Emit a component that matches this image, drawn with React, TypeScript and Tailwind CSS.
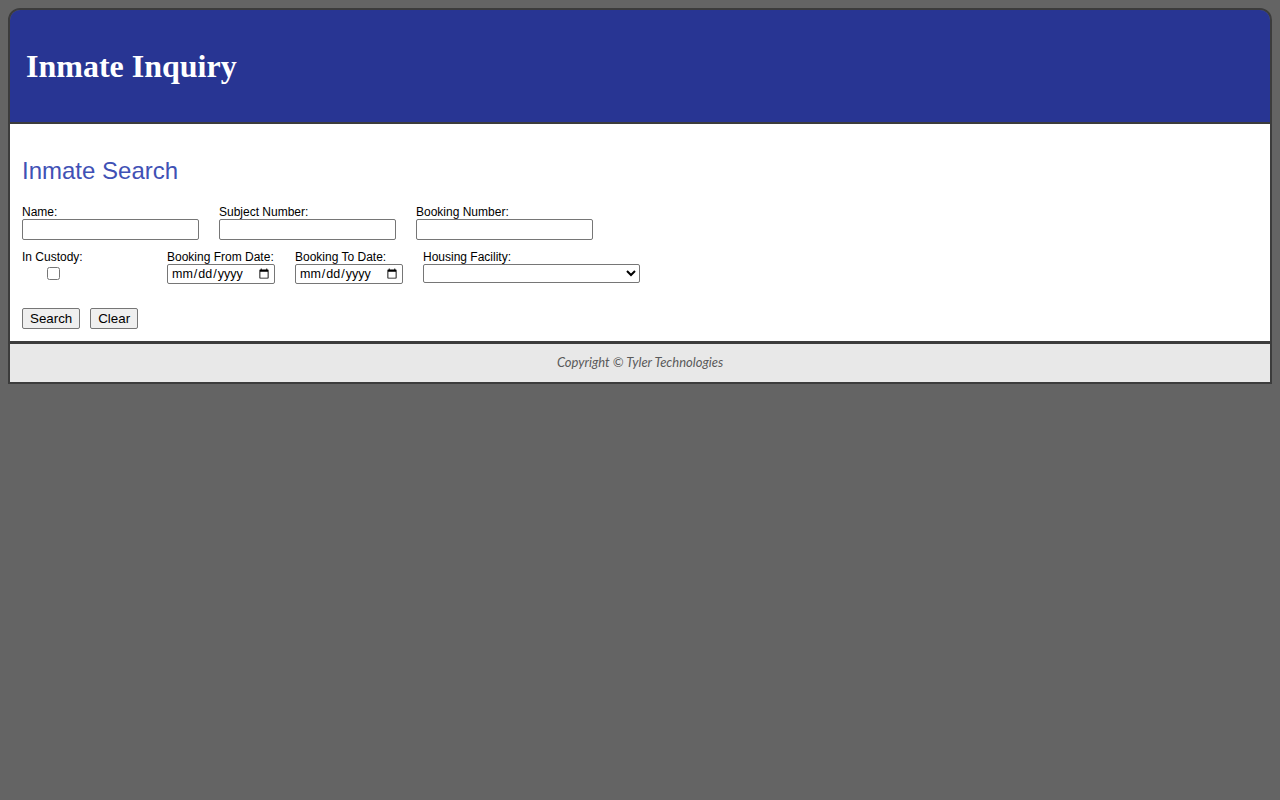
export default function App() {
  return (
    <div className="min-h-screen bg-[#646464] p-2 font-['Liberation_Sans',Arial,sans-serif]">
      <div className="overflow-hidden rounded-t-[12px] border-2 border-[#3c3c3c]">
        <header className="flex h-[114px] items-center border-b-2 border-[#3c3c3c] bg-[#283593] pl-4">
          <h1 className="font-['Liberation_Serif','Times_New_Roman',serif] text-[32px] font-bold leading-[32px] text-white">
            Inmate Inquiry
          </h1>
        </header>

        <main className="bg-white px-3 pb-3 pt-[35px]">
          <h2 className="text-[24px] leading-[24px] text-[#3f51b5]">Inmate Search</h2>

          <form className="mt-[21px]" onSubmit={(e) => e.preventDefault()}>
            <div className="flex gap-5">
              <Field label="Name:">
                <TextBox />
              </Field>
              <Field label="Subject Number:">
                <TextBox />
              </Field>
              <Field label="Booking Number:">
                <TextBox />
              </Field>
            </div>

            <div className="mt-[9px] flex">
              <div className="w-[145px]">
                <Label>In Custody:</Label>
                <div className="flex w-[62px] justify-center pt-[3px]">
                  <input type="checkbox" className="block h-[13px] w-[13px]" />
                </div>
              </div>
              <div className="w-[128px]">
                <Label>Booking From Date:</Label>
                <DateBox />
              </div>
              <div className="w-[128px]">
                <Label>Booking To Date:</Label>
                <DateBox />
              </div>
              <div>
                <Label>Housing Facility:</Label>
                <select className="block h-[19px] w-[217px] rounded-[2px] border border-[#767676] bg-white text-[13.33px] text-black">
                  <option value=""></option>
                </select>
              </div>
            </div>

            <div className="mt-6 flex gap-[10px]">
              <Button>Search</Button>
              <Button type="reset">Clear</Button>
            </div>
          </form>
        </main>

        <footer className="flex h-[41px] items-center justify-center border-t-[3px] border-[#3c3c3c] bg-[#e8e8e8]">
          <p className="font-['Lato','Open_Sans',sans-serif] text-[13px] italic text-[#5a5a5a]">
            Copyright © Tyler Technologies
          </p>
        </footer>
      </div>
    </div>
  )
}

function Label({ children }: { children: React.ReactNode }) {
  return <div className="pt-[1px] text-[12px] leading-[14px] text-black">{children}</div>
}

function Field({ label, children }: { label: string; children: React.ReactNode }) {
  return (
    <div>
      <Label>{label}</Label>
      {children}
    </div>
  )
}

function TextBox() {
  return (
    <input
      type="text"
      className="block h-[21px] w-[177px] rounded-[2px] border border-[#767676] bg-white px-[2px] text-[13.33px] text-black"
    />
  )
}

function DateBox() {
  return (
    <input
      type="date"
      className="block h-[20px] w-[108px] rounded-[2px] border border-[#767676] bg-white pl-[3px] pr-[2px] text-[12.5px] leading-[16px] text-black"
    />
  )
}

function Button({
  children,
  type = 'submit',
}: {
  children: React.ReactNode
  type?: 'submit' | 'reset'
}) {
  return (
    <button
      type={type}
      className="h-[21px] rounded-[2px] border border-[#767676] bg-[#efefef] px-[7px] text-[13.33px] leading-[15px] text-black"
    >
      {children}
    </button>
  )
}
